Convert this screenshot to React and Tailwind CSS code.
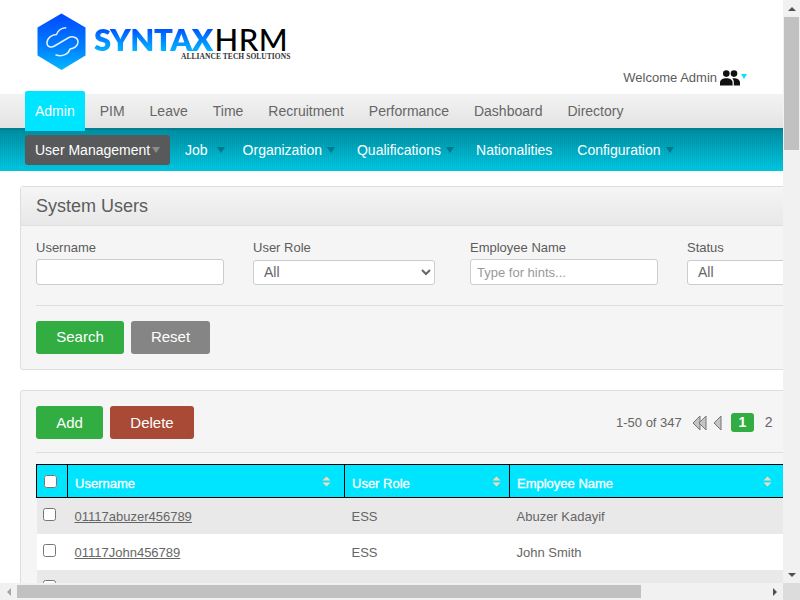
import React from "react";

const mainTabs = ["PIM", "Leave", "Time", "Recruitment", "Performance", "Dashboard", "Directory"];
const subTabs = [
  { label: "Job", box: "pr-[3px]", arrow: "ml-[9px]" },
  { label: "Organization", box: "pr-[7px]", arrow: "ml-[5px]" },
  { label: "Qualifications", box: "pr-[7px]", arrow: "ml-[5px]" },
  { label: "Nationalities", box: "pr-2.5", arrow: null },
  { label: "Configuration", box: "pr-[7px]", arrow: "ml-[5px]" },
];

const SortIcon = () => (
  <svg width="9" height="11" viewBox="0 0 9 11" className="absolute right-0 top-[2px]">
    <path d="M4.5 0.5L8.5 4.5H0.5Z" fill="#f5d9b8" />
    <path d="M0.5 6.5H8.5L4.5 10.5Z" fill="#f5d9b8" />
  </svg>
);

const PageArrow = ({ x }) => (
  <path d={`M${x} 1V15L${x - 7} 8Z`} fill="#c4c4c4" stroke="#777" strokeWidth="1" strokeLinejoin="round" />
);

const PeopleIcon = () => (
  <svg width="20" height="16" viewBox="0 0 20 16" className="ml-[3px] shrink-0" fill="#111">
    <circle cx="6.3" cy="3.6" r="3.3" />
    <circle cx="14" cy="3.6" r="3.3" />
    <path d="M0 15.5V12.5C0 9.8 3 8.3 6.3 8.3C9.6 8.3 12.6 9.8 12.6 12.5V15.5Z" />
    <path d="M13.8 15.5V12.3C13.8 10.8 13.2 9.4 12.2 8.6C12.9 8.4 13.5 8.3 14 8.3C17 8.3 20 9.8 20 12.5V15.5Z" />
  </svg>
);

const Logo = () => (
  <div className="flex items-start">
    <svg width="50" height="58" viewBox="0 0 50 58" className="shrink-0">
      <defs>
        <linearGradient id="hex" x1="0" y1="0" x2="0" y2="1">
          <stop offset="0" stopColor="#0048ff" />
          <stop offset="0.6" stopColor="#0080ff" />
          <stop offset="1" stopColor="#00b8ff" />
        </linearGradient>
      </defs>
      <path d="M24.5 0.5L48.5 14.5V42.5L24.5 57L0.5 42.5V14.5Z" fill="url(#hex)" />
      <path
        d="M28.7 14.7C25 15 21 17 19.5 21.5C15 21.5 10 25 10 30C10 34 14 35 17.5 33L31 25C35 22.5 41 24 41 29C41 33 37 35.5 33 36C31.5 41 26 44 19 42"
        fill="none"
        stroke="#fff"
        strokeWidth="1.5"
        strokeLinecap="round"
        strokeLinejoin="round"
        opacity="0.9"
      />
    </svg>
    <div className="ml-[7px] relative h-[50px] w-[200px]">
      <div className="flex text-[31px] leading-[26px] mt-[13px] font-['Lato',sans-serif]">
        <span className="font-extrabold tracking-[-0.5px] bg-gradient-to-b from-[#0b3cff] to-[#14b8ff] bg-clip-text text-transparent">SYNTAX</span>
        <span className="font-medium tracking-[0.5px] text-black ml-[2px]">HRM</span>
      </div>
      <div className="absolute left-[87px] top-[40px] whitespace-nowrap font-['Liberation_Serif',serif] font-bold text-[7.5px] leading-none tracking-[0.05px] text-[#333]">
        ALLIANCE TECH SOLUTIONS
      </div>
    </div>
  </div>
);

export default function App() {
  return (
    <div className="w-[800px] h-[600px] overflow-hidden bg-white text-[#5c5c5c] font-['Liberation_Sans',Arial,sans-serif]">
      <div className="w-[783px] h-[583px] overflow-hidden">
        {/* header */}
        <div className="h-[94px] flex justify-between pl-[37px] pr-[36px] pt-[13px]">
          <Logo />
          <div className="flex items-center self-end h-[24px] mb-[4px] text-[13px] text-[#5c5c5c]">
            <span>Welcome Admin</span>
            <PeopleIcon />
            <span className="ml-[1px] mb-[4px] border-x-[3px] border-t-[5px] border-x-transparent border-t-[#00e5ff]"></span>
          </div>
        </div>

        {/* main nav */}
        <div className="h-[34px] flex gap-[5px] pl-[25px] bg-gradient-to-b from-[#f3f3f3] to-[#e3e3e3] text-[14px]">
          <div className="relative z-10 h-[40px] -mt-[3px] px-2.5 flex items-center bg-[#00e5ff] text-white rounded-t-[2px]">Admin</div>
          {mainTabs.map((t) => (
            <div key={t} className="h-[34px] px-2.5 flex items-center text-[#666]">{t}</div>
          ))}
        </div>

        {/* sub nav */}
        <div className="h-[43px] flex gap-[5px] pl-[25px] pt-[7px] border-t-2 border-[#00808f] bg-[repeating-linear-gradient(90deg,rgba(0,0,0,0.035)_0,rgba(0,0,0,0.035)_1px,transparent_1px,transparent_2px),linear-gradient(180deg,#008ea3,#00c8e2)] text-[14px] text-white">
          <div className="h-[30px] -mt-[2px] pl-2.5 flex items-center bg-[#58595b] rounded-[3px] w-[145px]">
            User Management
            <span className="ml-[2px] border-x-[4px] border-t-[6px] border-x-transparent border-t-[#8c8c8c]"></span>
          </div>
          {subTabs.map((t) => (
            <div key={t.label} className={`h-[30px] -mt-[2px] flex items-center pl-2.5 ${t.box}`}>
              {t.label}
              {t.arrow && <span className={`${t.arrow} border-x-[4px] border-t-[6px] border-x-transparent border-t-[#00788c]`}></span>}
            </div>
          ))}
        </div>

        {/* content */}
        <div className="w-[940px] px-5 pt-[15px]">
          <div className="h-[184px] border border-[#dedede] rounded-[3px] bg-[#f5f5f5]">
            <div className="h-[39px] pl-[15px] flex items-center border-b border-[#dedede] bg-gradient-to-b from-[#f5f5f5] to-[#e8e8e8] text-[18px] text-[#5c5c5c]">
              System Users
            </div>
            <div className="px-[15px] pt-[14px]">
              <div className="grid grid-cols-[217px_217px_217px_217px] text-[13px] h-[65px]">
                <div>
                  <label className="block leading-[16px] mb-[3px]">Username</label>
                  <input className="block w-[188px] h-[26px] border border-[#ccc] rounded-[3px] bg-white" />
                </div>
                <div>
                  <label className="block leading-[16px] mb-[4px]">User Role</label>
                  <select className="block w-[182px] h-[25px] pl-1.5 pb-[2px] border border-[#ccc] rounded-[3px] bg-white text-[14px] text-[#666]">
                    <option>All</option>
                  </select>
                </div>
                <div>
                  <label className="block leading-[16px] mb-[3px]">Employee Name</label>
                  <input placeholder="Type for hints..." className="block w-[188px] h-[26px] px-1.5 border border-[#ccc] rounded-[3px] bg-white text-[13px] placeholder:text-[#999]" />
                </div>
                <div>
                  <label className="block leading-[16px] mb-[4px]">Status</label>
                  <select className="block w-[182px] h-[25px] pl-1.5 pb-[2px] border border-[#ccc] rounded-[3px] bg-white text-[14px] text-[#666]">
                    <option>All</option>
                  </select>
                </div>
              </div>
              <div className="border-t border-[#dedede] pt-[15px] flex gap-[7px] text-[15px] text-white">
                <button className="w-[88px] h-[33px] bg-[#32ad42] rounded-[3px]">Search</button>
                <button className="w-[79px] h-[33px] bg-[#858585] rounded-[3px]">Reset</button>
              </div>
            </div>
          </div>

          <div className="mt-5 border border-[#dedede] rounded-[3px] bg-[#f5f5f5] px-[15px] pt-[15px] pb-5">
            <div className="h-[47px] border-b border-[#dedede] flex text-[15px] text-white">
              <button className="w-[67px] h-[33px] pt-[1px] bg-[#32ad42] rounded-[3px]">Add</button>
              <button className="ml-[7px] w-[84px] h-[33px] pt-[1px] bg-[#a94a36] rounded-[3px]">Delete</button>
              <div className="ml-[422px] h-[33px] flex items-center text-[13px] text-[#666]">
                <span>1-50 of 347</span>
                <svg width="16" height="16" viewBox="0 0 16 16" className="ml-[9px]">
                  <PageArrow x={9} />
                  <PageArrow x={15} />
                </svg>
                <svg width="10" height="16" viewBox="0 0 10 16" className="ml-[5px]">
                  <PageArrow x={9} />
                </svg>
                <span className="ml-[9px] w-[23px] h-[19px] flex items-center justify-center bg-[#32ad42] rounded-[3px] text-white text-[14px] font-bold">1</span>
                <span className="ml-[11px] text-[14px]">2</span>
              </div>
            </div>

            <table className="mt-[11px] w-[868px] table-fixed border-collapse text-[13px]">
              <thead>
                <tr className="h-[33px] bg-[#00e5ff] text-white text-left [-webkit-text-stroke:0.3px_white]">
                  <th className="w-[31px] border border-black pl-[7px]">
                    <input type="checkbox" className="block" />
                  </th>
                  <th className="w-[277px] border border-black p-0 pl-[7px] pt-[5px] font-normal">
                    <div className="relative">Username<span className="absolute right-[13px] top-0"><SortIcon /></span></div>
                  </th>
                  <th className="w-[165px] border border-black p-0 pl-[7px] pt-[5px] font-normal">
                    <div className="relative">User Role<span className="absolute right-[8px] top-0"><SortIcon /></span></div>
                  </th>
                  <th className="w-[275px] border border-black border-r-0 p-0 pl-[7px] pt-[5px] font-normal">
                    <div className="relative">Employee Name<span className="absolute right-[13px] top-0"><SortIcon /></span></div>
                  </th>
                  <th className="border border-black border-l-0 p-0"></th>
                </tr>
              </thead>
              <tbody className="text-[#666]">
                <tr className="h-[36px] bg-[#e9e9e9]">
                  <td className="pl-[6px]"><input type="checkbox" className="block -mt-[3px]" /></td>
                  <td className="pl-[7px] pt-[2px]"><a href="#" className="underline">01117abuzer456789</a></td>
                  <td className="pl-[7px] pt-[2px]">ESS</td>
                  <td className="pl-[7px] pt-[2px]">Abuzer Kadayif</td>
                  <td></td>
                </tr>
                <tr className="h-[36px] bg-white">
                  <td className="pl-[6px]"><input type="checkbox" className="block -mt-[3px]" /></td>
                  <td className="pl-[7px] pt-[2px]"><a href="#" className="underline">01117John456789</a></td>
                  <td className="pl-[7px] pt-[2px]">ESS</td>
                  <td className="pl-[7px] pt-[2px]">John Smith</td>
                  <td></td>
                </tr>
                <tr className="h-[36px] bg-[#e9e9e9]">
                  <td className="pl-[6px]"><input type="checkbox" className="block -mt-[3px]" /></td>
                  <td></td>
                  <td></td>
                  <td></td>
                  <td></td>
                </tr>
              </tbody>
            </table>
          </div>
        </div>
      </div>

      {/* page scrollbars */}
      <div className="fixed top-0 right-0 w-[17px] h-[583px] bg-[#f1f1f1] flex flex-col items-center">
        <div className="h-[17px] flex items-center">
          <span className="border-x-[4px] border-b-[4px] border-x-transparent border-b-[#505050]"></span>
        </div>
        <div className="w-[15px] h-[133px] bg-[#c1c1c1]"></div>
        <div className="mt-auto h-[17px] flex items-center">
          <span className="border-x-[4px] border-t-[4px] border-x-transparent border-t-[#505050]"></span>
        </div>
      </div>
      <div className="fixed left-0 bottom-0 w-[783px] h-[17px] bg-[#f1f1f1] flex items-center">
        <div className="w-[17px] flex justify-center">
          <span className="border-y-[4px] border-r-[4px] border-y-transparent border-r-[#a3a3a3]"></span>
        </div>
        <div className="w-[624px] h-[13px] bg-[#c1c1c1]"></div>
        <div className="ml-auto w-[17px] flex justify-center">
          <span className="border-y-[4px] border-l-[4px] border-y-transparent border-l-[#505050]"></span>
        </div>
      </div>
      <div className="fixed right-0 bottom-0 w-[17px] h-[17px] bg-[#dcdcdc]"></div>
    </div>
  );
}
